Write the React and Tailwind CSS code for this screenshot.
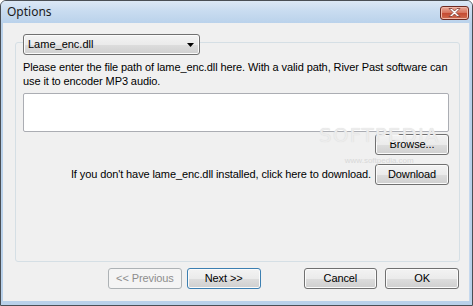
import clsx from "clsx";

const ui = { fontFamily: '"Liberation Sans", Arial, sans-serif' };

function Btn({ children, disabled, focused, className }) {
  return (
    <button
      disabled={disabled}
      className={clsx(
        "h-[21px] w-[74px] rounded-[3px] border text-[11px] leading-none tracking-[-0.1px]",
        disabled
          ? "border-[#adb2b5] bg-[#f4f4f4] text-[#8d8d8d]"
          : "text-black bg-[linear-gradient(180deg,#f3f3f3_0%,#ebebeb_50%,#dddddd_51%,#cfcfcf_100%)] shadow-[inset_0_0_0_1px_#fbfbfb]",
        !disabled && (focused ? "border-[#3c7fb1] shadow-[inset_0_0_0_1px_#7fd2f6]" : "border-[#707070]"),
        className
      )}
      style={ui}
    >
      {children}
    </button>
  );
}

export default function App() {
  return (
    <div className="relative w-[473px] h-[306px] flex flex-col bg-[#b9d1ea] border border-[#4a4f55] rounded-t-[6px] overflow-hidden">
      {/* title bar */}
      <div className="h-[22px] flex items-center pl-[6px] pr-[3px] bg-[linear-gradient(180deg,#dce8f5_0%,#c9dcf0_45%,#bad2eb_100%)]">
        <span className="text-[12px] text-[#1b1b1b]" style={{ fontFamily: '"Noto Sans", "Open Sans", sans-serif' }}>
          Options
        </span>
        <button className="ml-auto mt-[1px] w-[29px] h-[14px] rounded-[3px] border border-[#6e2a22] bg-[linear-gradient(180deg,#e9a999_0%,#d7735d_48%,#c54a32_52%,#cf6b4f_100%)] shadow-[inset_0_0_0_1px_#f0b8a8] flex items-center justify-center">
          <svg width="13" height="9" viewBox="0 0 13 9">
            <path d="M1 0.5h3l2.5 2.5 2.5-2.5h3l-4 4 4 4h-3l-2.5-2.5-2.5 2.5h-3l4-4z" fill="#ffffff" stroke="#7a3b33" strokeWidth="0.8" />
          </svg>
        </button>
      </div>

      {/* client area */}
      <div className="flex-1 ml-[2px] mr-[2px] mb-[4px] bg-[#f0f0f0] border-r border-[#c6d9ee] pl-[12px] pr-[10px] pt-[11px] flex flex-col" style={ui}>
        <div className="relative w-[445px] h-[228px] flex flex-col">
          <div className="mt-[8px] h-[220px] border border-[#d5dfe5] rounded-[3px] pl-[7px] pr-[10px] flex flex-col">
            <div className="-mt-[9px] w-[177px] h-[21px] rounded-[3px] border border-[#707070] bg-[linear-gradient(180deg,#f3f3f3_0%,#ebebeb_50%,#dddddd_51%,#cfcfcf_100%)] shadow-[inset_0_0_0_1px_#fbfbfb] flex items-center pl-[4px] pr-[5px]">
              <span className="text-[11px] text-black">Lame_enc.dll</span>
              <svg className="ml-auto" width="7" height="4" viewBox="0 0 7 4">
                <path d="M0 0h7L3.5 4z" fill="#000" />
              </svg>
            </div>
            <p className="mt-[5px] w-[432px] text-[11px] leading-[14px] tracking-[-0.1px] text-black">
              Please enter the file path of lame_enc.dll here. With a valid path, River Past software can use it to encoder MP3 audio.
            </p>
            <div className="mt-[5px] w-[426px] h-[39px] bg-white border border-[#abadb3] rounded-[2px]" />
            <div className="mt-[2px] flex justify-end">
              <Btn className="w-[73px]">Browse...</Btn>
            </div>
            <div className="mt-[9px] flex items-center justify-end gap-[4px]">
              <span className="text-[11px] tracking-[-0.1px] text-black">If you don't have lame_enc.dll installed, click here to download.</span>
              <Btn className="w-[73px]">Download</Btn>
            </div>
          </div>
        </div>

        <div className="mt-[6px] flex items-center">
          <Btn disabled className="ml-[93px]">&lt;&lt; Previous</Btn>
          <Btn focused className="ml-[5px] w-[73px]">Next &gt;&gt;</Btn>
          <Btn className="ml-[43px]">Cancel</Btn>
          <Btn className="ml-[8px]">OK</Btn>
        </div>
      </div>

      {/* watermark */}
      <div className="pointer-events-none absolute left-[318px] top-[124px] flex flex-col items-center">
        <span className="text-[20px] leading-none tracking-[1px] text-[#ececec] [text-shadow:0_0_1px_#d8d8d8]" style={{ fontFamily: '"DejaVu Sans", sans-serif' }}>
          SOFTPEDIA
        </span>
        <span className="mt-[12px] text-[8px] leading-none text-[#d8d8d8]" style={ui}>www.softpedia.com</span>
      </div>
    </div>
  );
}
